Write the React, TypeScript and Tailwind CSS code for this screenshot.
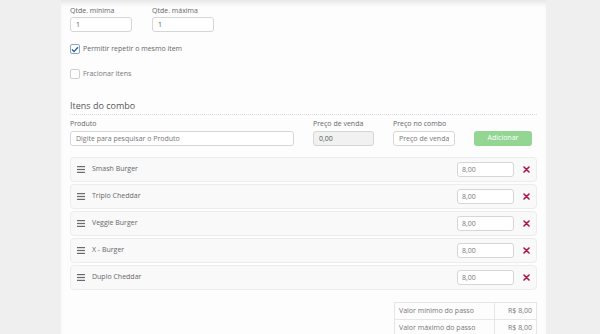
import React from 'react';

const items = ['Smash Burger', 'Triplo Cheddar', 'Veggie Burger', 'X - Burger', 'Duplo Cheddar'];

const DragIcon = () => (
    <svg width="8" height="7" viewBox="0 0 8 7" className="shrink-0">
        <rect x="0" y="0" width="8" height="1.2" fill="#6b6b6b" />
        <rect x="0" y="2.9" width="8" height="1.2" fill="#6b6b6b" />
        <rect x="0" y="5.8" width="8" height="1.2" fill="#6b6b6b" />
    </svg>
);

const RemoveIcon = () => (
    <svg width="7" height="7" viewBox="0 0 7 7" className="shrink-0">
        <path d="M1 1 L6 6 M6 1 L1 6" stroke="#b0124a" strokeWidth="1.6" strokeLinecap="round" />
    </svg>
);

const App: React.FC = () => {
    return (
        <div className="w-[600px] h-[334px] overflow-hidden bg-[#efefef] flex" style={{ fontFamily: '"Open Sans", sans-serif' }}>
            {/* Panel */}
            <div className="ml-[61px] w-[485px] h-full bg-[#fdfdfe] shadow-[inset_0_6px_6px_-4px_rgba(0,0,0,0.12)] px-[9px] pt-[6px] flex flex-col text-[#555]">

                {/* Quantidades */}
                <div className="flex gap-[20px]">
                    <div className="flex flex-col w-[62px]">
                        <label className="text-[7px] leading-[10px] text-[#666]">Qtde. mínima</label>
                        <input className="mt-[1px] h-[15px] w-full rounded-[3px] border border-[#d6d6d6] bg-white px-[5px] text-[7px] text-[#555] outline-none" defaultValue="1" />
                    </div>
                    <div className="flex flex-col w-[62px]">
                        <label className="text-[7px] leading-[10px] text-[#666]">Qtde. máxima</label>
                        <input className="mt-[1px] h-[15px] w-full rounded-[3px] border border-[#d6d6d6] bg-white px-[5px] text-[7px] text-[#555] outline-none" defaultValue="1" />
                    </div>
                </div>

                {/* Checkboxes */}
                <div className="mt-[12px] flex items-center gap-[3px]">
                    <span className="w-[10px] h-[10px] rounded-[2px] border border-[#8aa6c8] bg-white flex items-center justify-center">
                        <svg width="8" height="7" viewBox="0 0 8 7">
                            <path d="M1 3.6 L3 5.6 L7 1.2" stroke="#2f5d95" strokeWidth="1.4" fill="none" />
                        </svg>
                    </span>
                    <span className="text-[7px] text-[#666]">Permitir repetir o mesmo item</span>
                </div>
                <div className="mt-[14px] flex items-center gap-[3px]">
                    <span className="w-[10px] h-[10px] rounded-[2px] border border-[#cfcfcf] bg-white" />
                    <span className="text-[7px] text-[#777]">Fracionar itens</span>
                </div>

                {/* Itens do combo */}
                <div className="mt-[21px] text-[9px] leading-[12px] text-[#555]">Itens do combo</div>
                <div className="mt-[2px] w-[467px] border-t border-dotted border-[#dcdcdc]" />

                <div className="mt-[4px] flex items-end w-[467px]">
                    <div className="flex flex-col w-[224px]">
                        <label className="text-[7px] leading-[10px] text-[#666]">Produto</label>
                        <input className="mt-[2px] h-[15px] w-full rounded-[3px] border border-[#d6d6d6] bg-white px-[5px] text-[7px] outline-none placeholder:text-[#777]" placeholder="Digite para pesquisar o Produto" />
                    </div>
                    <div className="ml-[19px] flex flex-col w-[61px]">
                        <label className="text-[7px] leading-[10px] text-[#666]">Preço de venda</label>
                        <input className="mt-[2px] h-[15px] w-full rounded-[3px] border border-[#d6d6d6] bg-[#f1f1f1] px-[5px] text-[7px] text-[#555] outline-none" defaultValue="0,00" readOnly />
                    </div>
                    <div className="ml-[19px] flex flex-col w-[62px]">
                        <label className="text-[7px] leading-[10px] text-[#666]">Preço no combo</label>
                        <input className="mt-[2px] h-[15px] w-full rounded-[3px] border border-[#d6d6d6] bg-white px-[5px] text-[7px] outline-none placeholder:text-[#777]" placeholder="Preço de venda" />
                    </div>
                    <button className="ml-[19px] h-[15px] w-[58px] rounded-[3px] bg-[#93d593] text-white text-[7px]">Adicionar</button>
                </div>

                {/* Lista */}
                <div className="mt-[11px] flex flex-col gap-[2px] w-[467px]">
                    {items.map((name) => (
                        <div key={name} className="h-[25px] rounded-[4px] border border-[#ececec] bg-[#f9f9fa] flex items-start pl-[6px] pr-[6px]">
                            <div className="mt-[7px] flex items-center gap-[7px]">
                                <DragIcon />
                                <span className="text-[7px] leading-[8px] text-[#666]">{name}</span>
                            </div>
                            <div className="ml-auto mt-[4px] flex items-center gap-[9px]">
                                <input className="h-[15px] w-[57px] rounded-[3px] border border-[#d6d6d6] bg-white px-[4px] text-[7px] text-[#777] outline-none" defaultValue="8,00" />
                                <RemoveIcon />
                            </div>
                        </div>
                    ))}
                </div>

                {/* Resumo */}
                <div className="mt-[12px] ml-auto w-[143px] border border-[#e6e6e6] text-[7px] text-[#777]">
                    <div className="flex h-[17px] border-b border-[#e6e6e6]">
                        <div className="flex-1 flex items-center pl-[4px] border-r border-[#e6e6e6]">Valor mínimo do passo</div>
                        <div className="w-[41px] flex items-center justify-end pr-[4px]">R$ 8,00</div>
                    </div>
                    <div className="flex h-[17px]">
                        <div className="flex-1 flex items-center pl-[4px] border-r border-[#e6e6e6]">Valor máximo do passo</div>
                        <div className="w-[41px] flex items-center justify-end pr-[4px]">R$ 8,00</div>
                    </div>
                </div>
            </div>
        </div>
    );
};

export default App;
